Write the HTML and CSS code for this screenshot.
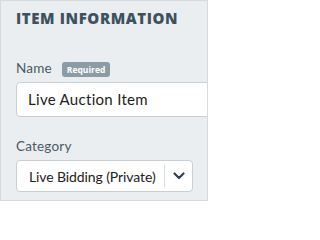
FILE: index.html
```html
<!DOCTYPE html>
<html>
<head>
<meta charset="utf-8">
<link rel="stylesheet" href="styles.css">
</head>
<body>
<div class="panel">
  <h2 class="title">ITEM INFORMATION</h2>
  <div class="field name-field">
    <div class="label-row"><span class="label">Name</span><span class="badge">Required</span></div>
    <div class="input">Live Auction Item</div>
  </div>
  <div class="field">
    <div class="label-row"><span class="label">Category</span></div>
    <div class="select">
      <span class="select-text">Live Bidding (Private)</span>
      <span class="select-btn">
        <svg width="12" height="8" viewBox="0 0 12 8"><path d="M1.5 1.5 L6 6 L10.5 1.5" fill="none" stroke="#2f3f4c" stroke-width="2.2" stroke-linecap="round" stroke-linejoin="round"/></svg>
      </span>
    </div>
  </div>
</div>
</body>
</html>
```
FILE: styles.css
```css
html, body { margin: 0; padding: 0; }
body { width: 209px; height: 202px; overflow: hidden; font-family: Lato, "Open Sans", sans-serif; }
.panel {
  box-sizing: border-box;
  width: 208px;
  height: 201px;
  background: #ebeef0;
  border: 1px solid #d6dadd;
  padding: 8px 0 0 15px;
  overflow: hidden;
}
.title {
  margin: 0;
  font-family: "Open Sans", sans-serif;
  font-size: 15px;
  font-weight: 800;
  letter-spacing: 0.6px;
  color: #3e515f;
  line-height: 18px;
}
.name-field { margin-top: 33px; }
.label-row { display: flex; align-items: center; gap: 10px; height: 16px; white-space: nowrap; }
.label { font-size: 13.5px; letter-spacing: 0.2px; color: #4a5a66; }
.badge {
  font-family: "Open Sans", sans-serif;
  background: #8d9ba5;
  color: #fff;
  font-size: 8.5px;
  font-weight: 700;
  border-radius: 3px;
  padding: 0 5px;
  height: 15px;
  line-height: 15px;
  margin-top: 2px;
}
.input {
  margin-top: 6px;
  height: 35px;
  box-sizing: border-box;
  width: 220px;
  background: #fff;
  border: 1px solid #c9cfd3;
  border-radius: 4px;
  padding: 0 11px;
  font-size: 15px;
  letter-spacing: 0.3px;
  line-height: 33px;
  color: #222;
  white-space: nowrap;
}
.field + .field { margin-top: 21px; }
.select {
  margin-top: 6px;
  width: 177px;
  height: 32px;
  box-sizing: border-box;
  background: #fff;
  border: 1px solid #c9cfd3;
  border-radius: 4px;
  display: flex;
  align-items: center;
}
.select-text { flex: 1; padding-left: 12px; font-size: 14px; letter-spacing: -0.1px; color: #222; white-space: nowrap; }
.select-btn {
  box-sizing: border-box;
  width: 28px;
  height: 22px;
  border-left: 1px solid #d6dadd;
  display: flex;
  align-items: center;
  justify-content: center;
}
```
